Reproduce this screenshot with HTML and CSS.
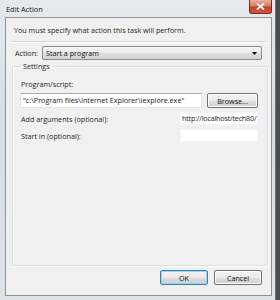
FILE: index.html
```html
<!DOCTYPE html>
<html>
<head>
	<meta charset="utf-8">
	<title>Edit Action</title>
	<link rel="stylesheet" href="styles.css">
</head>
<body>
	<div class="window">
		<div class="titlebar">
			<span class="title">Edit Action</span>
			<span class="close">
				<svg width="9" height="7" viewBox="0 0 9 7"><path d="M1 0.5 L8 6.5 M8 0.5 L1 6.5" stroke="#fff" stroke-width="1.8"/></svg>
			</span>
		</div>
		<div class="client">
			<p class="intro">You must specify what action this task will perform.</p>
			<div class="sep"></div>
			<div class="action-row">
				<label class="action-label">Action:</label>
				<div class="combo">
					<span>Start a program</span>
					<svg width="5" height="3" viewBox="0 0 5 3"><path d="M0 0 H5 L2.5 3 Z" fill="#000"/></svg>
				</div>
			</div>
			<fieldset class="settings">
				<legend>Settings</legend>
				<div class="field-label">Program/script:</div>
				<div class="program-row">
					<div class="input wide">"c:\Program files\Internet Explorer\iexplore.exe"</div>
					<button class="btn browse">Browse...</button>
				</div>
				<div class="opt-row">
					<span class="opt-label">Add arguments (optional):</span>
					<div class="input short">http://localhost/tech80/</div>
				</div>
				<div class="opt-row">
					<span class="opt-label">Start in (optional):</span>
					<div class="input short"></div>
				</div>
			</fieldset>
			<div class="buttons">
				<button class="btn default">OK</button>
				<button class="btn">Cancel</button>
			</div>
		</div>
	</div>
</body>
</html>
```

FILE: styles.css
```css
html, body {
	margin: 0;
	padding: 0;
	background: #4a4d50;
	font: 7.2px "Open Sans", "DejaVu Sans", sans-serif;
	color: #1e1e1e;
}
.window {
	width: 276px;
	height: 300px;
	box-sizing: border-box;
	background: linear-gradient(#e6eaee, #d6dce1 40%, #dfe3e7);
	border-right: 1px solid #6b7074;
	padding: 0 3px 0 5px;
	display: flex;
	flex-direction: column;
}
.titlebar {
	height: 17px;
	display: flex;
	align-items: flex-start;
	justify-content: space-between;
}
.title {
	margin-top: 4px;
	margin-left: 1px;
	font-size: 7.4px;
	color: #111;
}
.close {
	width: 23px;
	height: 14px;
	box-sizing: border-box;
	border: 1px solid #7a2b1f;
	border-top: 0;
	border-radius: 0 0 3px 3px;
	background: linear-gradient(#eab1a2, #d47a63 45%, #c1412a 55%, #d0583b);
	display: flex;
	align-items: center;
	justify-content: center;
}
.client {
	height: 279px;
	box-sizing: border-box;
	background: #f0f0f0;
	border: 1px solid #8e9296;
	padding: 0 5px;
	display: flex;
	flex-direction: column;
}
.intro {
	margin: 6px 0 0 3px;
	line-height: 12px;
}
.sep {
	margin: 5px 0 0 1px;
	height: 0;
	border-top: 1px solid #d5d9dd;
	border-bottom: 1px solid #fff;
}
.action-row {
	margin-top: 3px;
	display: flex;
	align-items: center;
}
.action-label {
	width: 27px;
	margin-left: 4px;
}
.combo {
	width: 220px;
	height: 14px;
	box-sizing: border-box;
	border: 1px solid #8a8a8a;
	border-radius: 2px;
	background: linear-gradient(#f4f4f4, #ebebeb 50%, #dedede 51%, #d4d4d4);
	display: flex;
	align-items: center;
	justify-content: space-between;
	padding: 0 4px 0 3px;
	color: #111;
}
.settings {
	margin: 1px 0 0 1px;
	padding: 0 9px 0 8px;
	width: 256px;
	height: 205px;
	box-sizing: border-box;
	border: 1px solid #d5dfe5;
	border-radius: 2px;
	box-shadow: inset 1px 1px #fff, 1px 1px #fff;
}
.settings legend {
	padding: 0 2px;
	margin-left: 0;
	line-height: 10px;
}
.field-label {
	margin-top: 8px;
	line-height: 10px;
}
.program-row {
	margin: 4px 0 0 -1px;
	display: flex;
	align-items: center;
}
.input {
	height: 15px;
	box-sizing: border-box;
	background: #fff;
	border: 1px solid #e2e3ea;
	border-top-color: #abadb3;
	line-height: 13px;
	padding: 0 2px;
	white-space: nowrap;
	overflow: hidden;
}
.wide {
	width: 182px;
}
.btn {
	font: inherit;
	color: #111;
	height: 15px;
	padding: 0;
	box-sizing: border-box;
	border: 1px solid #707070;
	border-radius: 2px;
	background: linear-gradient(#f2f2f2, #ebebeb 50%, #dddddd 51%, #cfcfcf);
	box-shadow: inset 0 0 0 1px #fcfcfc;
}
.browse {
	width: 51px;
	margin-left: 5px;
}
.opt-row {
	display: flex;
	align-items: center;
	justify-content: space-between;
	margin-top: 4px;
}
.short {
	width: 78px;
	height: 13px;
	border-color: #f5f5f5;
	line-height: 11px;
	padding: 0 1px;
	letter-spacing: -0.2px;
}
.buttons {
	margin-top: 4px;
	display: flex;
	justify-content: flex-end;
	gap: 6px;
	padding-right: 4px;
}
.buttons .btn {
	width: 48px;
}
.btn.default {
	border-color: #3c7fb1;
	box-shadow: inset 0 0 0 1px #97d3f0;
}
```
